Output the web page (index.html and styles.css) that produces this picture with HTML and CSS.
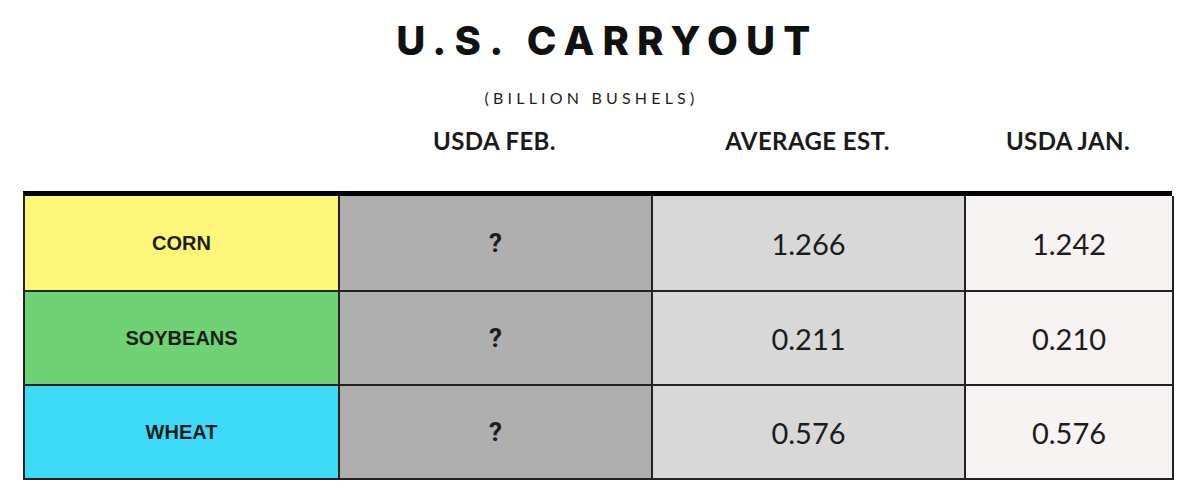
FILE: index.html
```html
<!DOCTYPE html>
<html>
<head>
<meta charset="utf-8">
<link rel="stylesheet" href="styles.css">
</head>
<body>
<div class="page">
  <h1 class="title">U.S. CARRYOUT</h1>
  <div class="subtitle">(BILLION BUSHELS)</div>
  <div class="heads">
    <div></div>
    <div class="head">USDA FEB.</div>
    <div class="head">AVERAGE EST.</div>
    <div class="head">USDA JAN.</div>
  </div>
  <div class="table">
    <div class="cell label corn">CORN</div>
    <div class="cell q">?</div>
    <div class="cell avg">1.266</div>
    <div class="cell jan">1.242</div>
    <div class="cell label soy">SOYBEANS</div>
    <div class="cell q">?</div>
    <div class="cell avg">0.211</div>
    <div class="cell jan">0.210</div>
    <div class="cell label wheat">WHEAT</div>
    <div class="cell q">?</div>
    <div class="cell avg">0.576</div>
    <div class="cell jan">0.576</div>
  </div>
</div>
</body>
</html>
```
FILE: styles.css
```css
html, body {
  margin: 0;
  padding: 0;
  background: #ffffff;
}
.page {
  width: 1191px;
  height: 502px;
  padding-top: 20px;
  box-sizing: border-box;
}
.title {
  margin: 0;
  padding-left: 24px;
  text-align: center;
  font-family: "Inter", "Liberation Sans", sans-serif;
  font-weight: 800;
  font-size: 40px;
  line-height: 42px;
  letter-spacing: 8.2px;
  color: #111111;
}
.subtitle {
  margin-top: 26px;
  text-align: center;
  padding-right: 8px;
  font-family: "Lato", "Liberation Sans", sans-serif;
  font-weight: 400;
  font-size: 16px;
  line-height: 20px;
  letter-spacing: 4.2px;
  color: #1e1e1e;
}
.heads {
  margin-left: 23px;
  width: 1149px;
  display: grid;
  grid-template-columns: 315px 313px 313px 208px;
  margin-top: 12px;
  height: 60px;
}
.head {
  text-align: center;
  font-family: "Lato", "Liberation Sans", sans-serif;
  font-weight: 700;
  font-size: 24px;
  line-height: 42px;
  letter-spacing: 0.4px;
  color: #1a1a1a;
}
.table {
  margin-left: 23px;
  width: 1149px;
  box-sizing: border-box;
  display: grid;
  grid-template-columns: 315px 313px 313px 208px;
  grid-template-rows: 96px 94px 94px;
  border-top: 5px solid #000000;
  border-left: 2px solid #222222;
  margin-top: 11px;
}
.cell {
  display: flex;
  align-items: center;
  justify-content: center;
  border-right: 2px solid #222222;
  border-bottom: 2px solid #222222;
  color: #1c1c1c;
}
.label {
  font-family: "Liberation Sans", sans-serif;
  font-weight: 700;
  font-size: 20px;
}
.corn { background: #fdf679; }
.soy { background: #6fd275; }
.wheat { background: #3cdaf6; }
.q {
  background: #afafaf;
  font-family: "Roboto", "Liberation Sans", sans-serif;
  font-weight: 700;
  font-size: 26px;
}
.avg, .jan {
  font-family: "Lato", "Liberation Sans", sans-serif;
  font-weight: 400;
  font-size: 29px;
}
.avg { background: #d8d8d8; }
.jan { background: #f6f3f2; }
```
